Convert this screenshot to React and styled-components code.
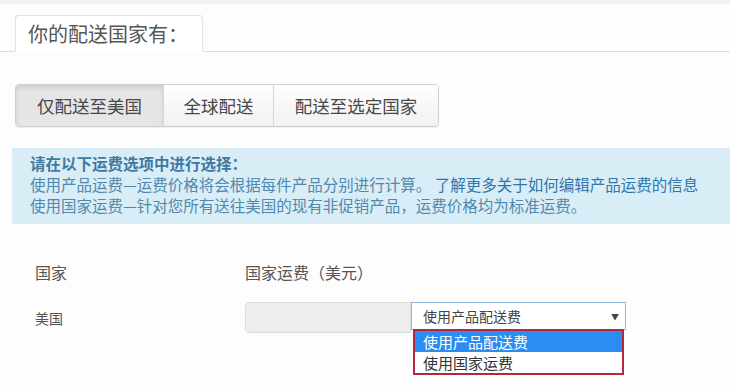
import React from 'react';
import styled, { createGlobalStyle } from 'styled-components';

const GlobalStyle = createGlobalStyle`
  body {
    margin: 0;
    background: #fff;
    font-family: "Noto Sans CJK SC", "Liberation Sans", sans-serif;
    color: #555;
  }
`;

const Page = styled.div`
  width: 730px;
  height: 391px;
  overflow: hidden;
  background: #fdfdfd;
`;

const TopStrip = styled.div`
  height: 4px;
  background: #f2f2f2;
`;

const TabBar = styled.div`
  display: flex;
  margin-top: 11px;
  padding-left: 15px;
  border-bottom: 1px solid #dedede;
`;

const Tab = styled.div`
  height: 35px;
  padding: 0 14px 0 12px;
  margin-bottom: -1px;
  display: flex;
  align-items: center;
  font-size: 20px;
  color: #555;
  background: #fff;
  border: 1px solid #e2e2e2;
  border-bottom-color: #fff;
  border-radius: 4px 4px 0 0;
`;

const ButtonGroup = styled.div`
  display: inline-flex;
  margin: 32px 0 0 15px;
  border: 1px solid #cfcfcf;
  border-radius: 4px;
  overflow: hidden;
  box-shadow: 0 1px 1px rgba(0, 0, 0, 0.06);
`;

const GroupButton = styled.button`
  height: 41px;
  width: ${(p) => p.w}px;
  border: none;
  border-left: ${(p) => (p.first ? 'none' : '1px solid #d6d6d6')};
  font-family: inherit;
  font-size: 17.5px;
  color: #484848;
  background: ${(p) =>
    p.active ? '#e6e6e6' : 'linear-gradient(#ffffff, #f1f1f1)'};
  box-shadow: ${(p) => (p.active ? 'inset 0 3px 5px rgba(0,0,0,0.1)' : 'none')};
  padding: 0;
`;

const InfoBox = styled.div`
  margin: 21px 0 0 12px;
  padding: 5px 18px 8px;
  background: #d9edf7;
  color: #5089ad;
  font-size: 15.5px;
  line-height: 21px;
`;

const InfoTitle = styled.div`
  font-weight: 700;
  color: #3d7aa1;
`;

const Link = styled.a`
  color: #2d77ad;
  text-decoration: none;
`;

const Table = styled.div`
  display: grid;
  grid-template-columns: 210px 1fr;
  row-gap: 18px;
  margin-top: 36px;
  padding-left: 35px;
  align-items: center;
`;

const HeadCell = styled.div`
  font-size: 16px;
  line-height: 24px;
  color: #555;
`;

const Cell = styled.div`
  font-size: 14px;
  color: #555;
`;

const Controls = styled.div`
  display: flex;
  align-items: flex-start;
`;

const PriceInput = styled.div`
  width: 164px;
  height: 29px;
  background: #eee;
  border: 1px solid #dcdcdc;
  border-radius: 4px 0 0 4px;
`;

const SelectWrap = styled.div`
  position: relative;
`;

const Select = styled.div`
  width: 196px;
  height: 26px;
  padding: 0 6px 0 11px;
  display: flex;
  align-items: center;
  justify-content: space-between;
  background: #fff;
  border: 1px solid #8fb6dc;
  font-size: 14px;
  color: #444;
`;

const Arrow = styled.span`
  font-size: 8px;
  color: #444;
`;

const Dropdown = styled.div`
  position: absolute;
  top: 27px;
  left: 2px;
  width: 207px;
  border: 2px solid #b3283a;
  background: #fff;
`;

const Option = styled.div`
  height: 21px;
  padding-left: 8px;
  display: flex;
  align-items: center;
  font-size: 15px;
  color: ${(p) => (p.selected ? '#fff' : '#333')};
  background: ${(p) => (p.selected ? '#2b8cf2' : '#fff')};
`;

export default function App() {
  return (
    <Page>
      <GlobalStyle />
      <TopStrip />
      <TabBar>
        <Tab>你的配送国家有：</Tab>
      </TabBar>

      <ButtonGroup>
        <GroupButton first active w={147}>仅配送至美国</GroupButton>
        <GroupButton w={110}>全球配送</GroupButton>
        <GroupButton w={165}>配送至选定国家</GroupButton>
      </ButtonGroup>

      <InfoBox>
        <InfoTitle>请在以下运费选项中进行选择：</InfoTitle>
        <div>
          使用产品运费—运费价格将会根据每件产品分别进行计算。 <Link>了解更多关于如何编辑产品运费的信息</Link>
        </div>
        <div>使用国家运费—针对您所有送往美国的现有非促销产品，运费价格均为标准运费。</div>
      </InfoBox>

      <Table>
        <HeadCell>国家</HeadCell>
        <HeadCell>国家运费（美元）</HeadCell>
        <Cell>美国</Cell>
        <Controls>
          <PriceInput />
          <SelectWrap>
            <Select>
              使用产品配送费
              <Arrow>▼</Arrow>
            </Select>
            <Dropdown>
              <Option selected>使用产品配送费</Option>
              <Option>使用国家运费</Option>
            </Dropdown>
          </SelectWrap>
        </Controls>
      </Table>
    </Page>
  );
}
